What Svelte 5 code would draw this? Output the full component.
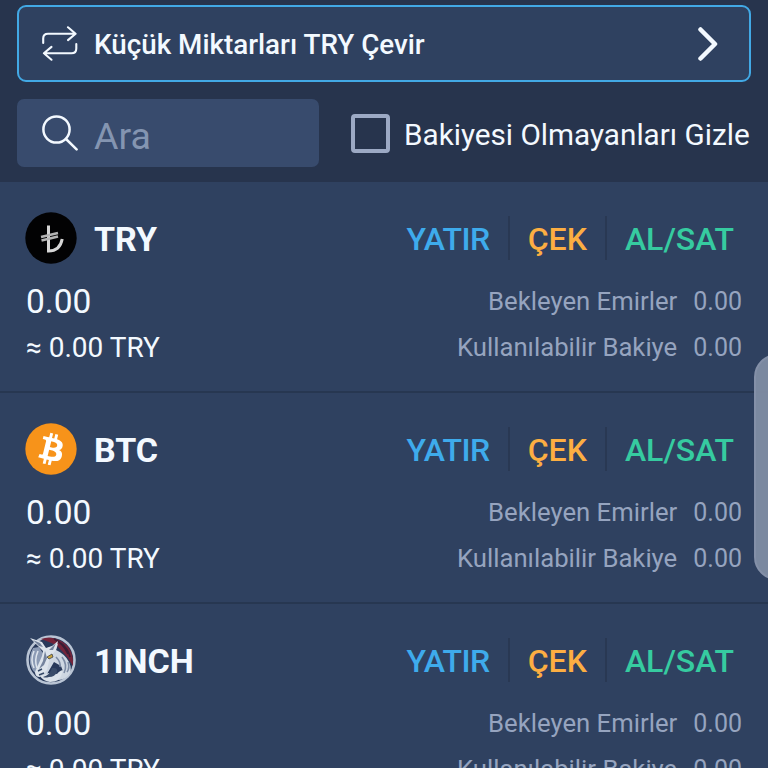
<script>
    const amount = '0.00'

    let hideEmpty = $state(false)
    let search = $state('')

    const coins = [
        { symbol: 'TRY' },
        { symbol: 'BTC' },
        { symbol: '1INCH' }
    ]
</script>

<div class="wallet">
    <header>
        <button class="convert">
            <svg class="swap" viewBox="0 0 36 36">
                <path d="M1.2 17v-4.5q0-4.8 4.8-4.8h27M26 1.3l7.6 6.4-7.6 6.4" />
                <path d="M34.3 18v4.5q0 4.8-4.8 4.8H2M9.5 20.9l-7.6 6.4 7.6 6.4" />
            </svg>
            <span>Küçük Miktarları TRY Çevir</span>
            <svg class="chevron" viewBox="0 0 20 34"><path d="M2.5 2.5 17 17 2.5 31.5" /></svg>
        </button>

        <div class="filters">
            <label class="search">
                <svg viewBox="0 0 36 36">
                    <circle cx="14.5" cy="14.5" r="13.1" />
                    <path d="m24 24 10.6 10.4" />
                </svg>
                <input type="text" placeholder="Ara" bind:value={search} />
            </label>
            <label class="hide">
                <input type="checkbox" bind:checked={hideEmpty} />
                <span>Bakiyesi Olmayanları Gizle</span>
            </label>
        </div>
    </header>

    {#each coins as coin (coin.symbol)}
        <section class="coin">
            <div class="top">
                {#if coin.symbol === 'TRY'}
                    <svg class="logo" viewBox="0 0 52 52">
                        <circle cx="26" cy="26" r="25.7" fill="#020203" />
                        <path d="M23.5 13.5V39q11.5 0 13.7-12" fill="none" stroke="#d6d6d6" stroke-width="3" />
                        <path d="m16 25 17-4M16.5 28.6l16.5-4" stroke="#b4b4b4" stroke-width="2.6" />
                    </svg>
                {:else if coin.symbol === 'BTC'}
                    <svg class="logo" viewBox="0 0 32 32">
                        <circle cx="16" cy="16" r="15.8" fill="#f7931a" />
                        <path
                            fill="#fff"
                            d="M23.19 14.02c.31-2.1-1.29-3.23-3.47-3.98l.7-2.85-1.72-.43-.7 2.77-1.38-.32.7-2.79-1.73-.43-.7 2.84-1.1-.26-2.39-.6-.46 1.85s1.28.3 1.26.32c.7.17.82.63.8 1l-1.96 7.87c-.08.21-.3.53-.8.41.02.03-1.25-.31-1.25-.31l-.86 1.98 3.48.88-.72 2.88 1.73.43.71-2.84 1.38.35-.71 2.83 1.73.43.71-2.87c2.95.56 5.17.33 6.1-2.33.75-2.15-.04-3.39-1.59-4.19 1.13-.26 1.98-1 2.21-2.54zm-3.95 5.54c-.53 2.15-4.15.99-5.32.7l.95-3.81c1.17.29 4.93.87 4.37 3.11zm.54-5.57c-.49 1.95-3.5.96-4.47.72l.86-3.46c.98.24 4.12.7 3.61 2.74z"
                        />
                    </svg>
                {:else}
                    <svg class="logo" viewBox="0 0 52 52">
                        <circle cx="26" cy="26" r="23.5" fill="#28395a" stroke="#b9c4d4" stroke-width="2.6" />
                        <!-- silver hair behind the head -->
                        <path d="M8 14Q2 25 7 35q2 4 6 5l2-8 4-11-5-8z" fill="#8c9bb5" />
                        <path d="M9 17Q5 26 9 34M13 17q-4 9-1 17" fill="none" stroke="#dce3ec" stroke-width="1.6" />
                        <!-- mane -->
                        <path d="M16 5q10-4 20 2 13 7 12 25l-5-8-6-7-6-6-7-3z" fill="#74243a" />
                        <path d="M29 5q9 4 14 15M36 9q7 5 9 14" fill="none" stroke="#391d35" stroke-width="1.5" />
                        <!-- chin and chest -->
                        <path d="M15 42q7-5 17-2 6-7 8-1-5 9-15 9-7-1-10-6z" fill="#dbe2ea" />
                        <path d="m33 10-2 6q9 4 13 12 4 8-1 14-5 4-10 4 7-7 3-14l-7-4-7 12-7 2-3-4 5-11 3-12z" fill="#ced7e2" />
                        <path d="m5 4 12 4 4 6 6-2 6-5-2 9-6 7-3 13-7 7q-5 0-5-5l7-16 1-5z" fill="#dde4ec" />
                        <path d="m8 6 7 3 3 4-4-1zM24 16l7-7-3 7zM20 17l-2 10-4 8 5-4 3-7z" fill="#74839d" />
                        <path d="M31 23q5 5 4 10M37 23q6 8 2 16M43 28q2 6-1 10" fill="none" stroke="#7d8ca5" stroke-width="1.6" />
                        <path d="M29 34q4 0 3 4-2 5-8 5-4 1-6 0 7-2 9-9z" fill="#394b69" />
                        <path d="m13 37 4-2M14 41l5-2" stroke="#344866" stroke-width="1.5" />
                        <path d="m22 23 5-3 1 3-4 2z" fill="#c8a63d" stroke="#40454c" stroke-width=".8" />
                    </svg>
                {/if}
                <h2>{coin.symbol}</h2>
                <nav>
                    <a class="deposit" href="#deposit">YATIR</a>
                    <a class="withdraw" href="#withdraw">ÇEK</a>
                    <a class="trade" href="#trade">AL/SAT</a>
                </nav>
            </div>
            <div class="line">
                <span class="total">{amount}</span>
                <span class="info">Bekleyen Emirler</span>
                <span class="num">{amount}</span>
            </div>
            <div class="line">
                <span class="approx">≈ {amount} TRY</span>
                <span class="info">Kullanılabilir Bakiye</span>
                <span class="num">{amount}</span>
            </div>
        </section>
    {/each}

    <div class="handle"></div>
</div>

<style>
    :global(body) {
        margin: 0;
        background: #2f4160;
    }
    .wallet {
        position: relative;
        box-sizing: border-box;
        width: 768px;
        height: 768px;
        overflow: hidden;
        background: #2f4160;
        color: #f3f9ff;
        font-family: Roboto, sans-serif;
    }
    header {
        box-sizing: border-box;
        height: 182px;
        padding: 5px 17px 0;
        background: #27344d;
    }

    /* convert small amounts */
    .convert {
        display: flex;
        align-items: center;
        box-sizing: border-box;
        width: 734px;
        height: 77px;
        padding: 0 31px 0 23px;
        border: 2px solid #42a9e5;
        border-radius: 9px;
        background: #2f4160;
        color: inherit;
        font: 500 27.8px Roboto, sans-serif;
        text-align: left;
    }
    .convert span {
        flex: 1;
        margin-left: 16px;
        padding-top: 2px;
        white-space: nowrap;
    }
    svg {
        flex: none;
    }
    .swap,
    .chevron,
    .search svg {
        fill: none;
        stroke: #f3f9ff;
        stroke-linecap: round;
        stroke-linejoin: round;
    }
    .swap {
        width: 36px;
        height: 36px;
        stroke-width: 2.1;
    }
    .chevron {
        width: 20px;
        height: 34px;
        stroke-width: 4.5;
    }

    .filters {
        display: flex;
        align-items: center;
        margin-top: 17px;
    }
    .search {
        display: flex;
        align-items: center;
        box-sizing: border-box;
        width: 302px;
        height: 68px;
        padding-left: 25px;
        border-radius: 7px;
        background: #384b6d;
    }
    .search svg {
        width: 36px;
        height: 36px;
        stroke-width: 2.5;
    }
    .search input {
        width: 200px;
        margin-left: 16px;
        padding: 6px 0 0;
        border: 0;
        outline: 0;
        background: none;
        color: inherit;
        font: 37.5px Roboto, sans-serif;
    }
    .search input::placeholder {
        color: #8495b1;
        opacity: 1;
    }
    .hide {
        display: flex;
        align-items: center;
        margin-left: 32px;
        font-size: 29.7px;
        white-space: nowrap;
    }
    .hide span {
        padding-top: 3px;
    }
    .hide input {
        appearance: none;
        box-sizing: border-box;
        width: 39px;
        height: 39px;
        margin: 0 14px 0 0;
        border: 4px solid #9ca9c4;
        border-radius: 4px;
    }

    /* coin rows */
    .coin {
        box-sizing: border-box;
        height: 211px;
        padding: 30px 26px 0;
        border-bottom: 2px solid #273751;
    }
    .top {
        display: flex;
        align-items: center;
        height: 52px;
        margin-bottom: 14px;
    }
    .logo {
        width: 52px;
        height: 52px;
        margin-left: -1px;
    }
    h2 {
        flex: 1;
        margin: 2px 0 0 17px;
        font-size: 34px;
        font-weight: 700;
    }
    nav {
        display: flex;
        margin-right: 8px;
    }
    nav a {
        height: 44px;
        font-size: 32px;
        font-weight: 500;
        line-height: 46px;
        text-decoration: none;
    }
    nav a + a {
        margin-left: 18px;
        padding-left: 18px;
        border-left: 2px solid #293853;
    }
    .deposit {
        color: #3eabec;
        letter-spacing: -0.5px;
    }
    .withdraw {
        color: #fcae42;
    }
    .trade {
        color: #36cba0;
    }
    .line {
        display: flex;
        align-items: center;
        height: 46px;
        color: #96a4bf;
        font-size: 25px;
    }
    .total,
    .approx {
        flex: 1;
        color: #f3f9ff;
    }
    .total {
        font-size: 33.5px;
    }
    .approx {
        font-size: 28px;
    }
    .info {
        font-size: 25.7px;
    }
    .num {
        margin-left: 16px;
    }

    .handle {
        position: absolute;
        top: 354px;
        right: -32px;
        box-sizing: border-box;
        width: 46px;
        height: 226px;
        border: 2px solid #8490a8;
        border-radius: 26px;
        background: rgba(129, 141, 164, 0.94);
    }
</style>
